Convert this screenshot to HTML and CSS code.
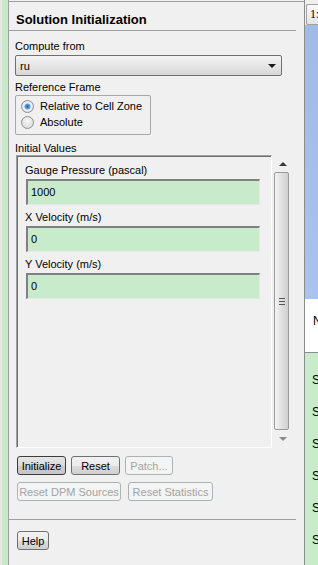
FILE: index.html
```html
<!DOCTYPE html>
<html lang="en">
<head>
    <meta charset="UTF-8">
    <meta name="viewport" content="width=device-width, initial-scale=1.0">
    <title>Solution Initialization</title>
    <link rel="stylesheet" href="styles.css">
</head>
<body>
    <div class="window">
        <div class="leftEdge"></div>

        <div class="panel">
            <div class="title">Solution Initialization</div>

            <div class="content">
                <div class="label firstLabel">Compute from</div>
                <div class="select">
                    <span>ru</span>
                    <span class="caret"></span>
                </div>

                <!-- Reference Frame -->
                <div class="label frameLabel">Reference Frame</div>
                <div class="group">
                    <div class="radioRow"><span class="radio checked"></span>Relative to Cell Zone</div>
                    <div class="radioRow"><span class="radio"></span>Absolute</div>
                </div>

                <!-- Initial Values -->
                <div class="label valuesLabel">Initial Values</div>
                <div class="values">
                    <div class="viewport">
                        <div class="fieldLabel">Gauge Pressure (pascal)</div>
                        <div class="field">1000</div>
                        <div class="fieldLabel">X Velocity (m/s)</div>
                        <div class="field">0</div>
                        <div class="fieldLabel">Y Velocity (m/s)</div>
                        <div class="field">0</div>
                    </div>
                    <div class="scrollbar">
                        <div class="arrowBox"><span class="arrow up"></span></div>
                        <div class="thumb"><span class="grip"></span></div>
                        <div class="arrowBox bottom"><span class="arrow down"></span></div>
                    </div>
                </div>

                <div class="buttonRow first">
                    <button class="btn active" id="initialize">Initialize</button>
                    <button class="btn" id="reset">Reset</button>
                    <button class="btn" id="patch" disabled>Patch...</button>
                </div>
                <div class="buttonRow second">
                    <button class="btn" id="resetDpm" disabled>Reset DPM Sources</button>
                    <button class="btn" id="resetStats" disabled>Reset Statistics</button>
                </div>
            </div>

            <div class="separator"></div>
            <div class="footer">
                <button class="btn" id="help">Help</button>
            </div>
        </div>

        <div class="rightEdge">
            <div class="tab">1:</div>
            <div class="blueArea"></div>
            <div class="whiteArea"><span>N</span></div>
            <div class="greenArea">
                <div>S</div>
                <div>S</div>
                <div>S</div>
                <div>S</div>
                <div>S</div>
                <div>S</div>
            </div>
        </div>
    </div>
</body>
</html>
```

FILE: styles.css
```css
body {
    margin: 0;
    width: 318px;
    height: 565px;
    overflow: hidden;
    font-family: "Liberation Sans", Arial, sans-serif;
    font-size: 11px;
    color: #000;
    background-color: #f0f0f0;
}

.window {
    display: flex;
    height: 565px;
}

.leftEdge {
    width: 6px;
    border-left: 2px solid #e2e8e2;
    border-right: 1px solid #a0a0a0;
    background-color: #c7e9c7;
}

.panel {
    flex: 1;
    margin-top: 1px;
    border-top: 1px solid #a0a0a0;
    background-color: #f0f0f0;
}

.title {
    margin-right: 8px;
    padding: 10px 0 2px 7px;
    font-size: 13px;
    font-weight: bold;
    line-height: 16px;
    border-bottom: 1px solid #a0a0a0;
}

.content {
    padding-left: 6px;
}

.label {
    line-height: 14px;
}

.firstLabel {
    margin-top: 8px;
}

.frameLabel {
    margin-top: 4px;
}

.valuesLabel {
    margin-top: 6px;
}

/* Dropdown */
.select {
    display: flex;
    align-items: center;
    justify-content: space-between;
    box-sizing: border-box;
    width: 267px;
    height: 21px;
    margin-top: 2px;
    padding: 0 5px 0 4px;
    border: 1px solid #707070;
    border-radius: 2px;
    background: linear-gradient(#f4f4f4, #e6e6e6 50%, #d8d8d8);
}

.caret {
    width: 0;
    height: 0;
    border-left: 4px solid transparent;
    border-right: 4px solid transparent;
    border-top: 4px solid #1a1a1a;
}

/* Radio group */
.group {
    box-sizing: border-box;
    width: 136px;
    height: 40px;
    margin-top: 1px;
    padding: 2px 0 0 5px;
    border: 1px solid #a8a8a8;
    border-radius: 2px;
}

.radioRow {
    display: flex;
    align-items: center;
    height: 16px;
}

.radio {
    box-sizing: border-box;
    width: 13px;
    height: 13px;
    margin-right: 6px;
    border: 1px solid #8e8f8f;
    border-radius: 50%;
    background: radial-gradient(circle at 50% 40%, #f8f8f8, #d4d4d4);
}

.radio.checked {
    background: radial-gradient(circle, #2a6bb8 0, #5c9ae0 2.5px, #f4f4f4 3.5px, #dcdcdc 6px);
}

/* Initial values box */
.values {
    display: flex;
    height: 293px;
    margin-left: 1px;
}

.viewport {
    box-sizing: border-box;
    width: 256px;
    padding: 7px 0 0 8px;
    border-top: 1px solid #a0a0a0;
    border-left: 1px solid #a0a0a0;
    border-right: 1px solid #ffffff;
    border-bottom: 1px solid #ffffff;
    box-shadow: inset 1px 1px 0 #6d6d6d;
}

.fieldLabel {
    line-height: 14px;
    margin-top: 5px;
}

.fieldLabel:first-child {
    margin-top: 0;
}

.field {
    box-sizing: border-box;
    width: 234px;
    height: 26px;
    margin: 2px 0 0 1px;
    padding-left: 3px;
    line-height: 22px;
    border-top: 2px solid #808080;
    border-left: 2px solid #808080;
    border-right: 1px solid #e8e8e8;
    border-bottom: 1px solid #e8e8e8;
    background-color: #c8ebcb;
}

.scrollbar {
    display: flex;
    flex-direction: column;
    width: 19px;
}

.arrowBox {
    display: flex;
    justify-content: center;
    align-items: center;
    height: 17px;
    padding-left: 2px;
}

.arrowBox.bottom {
    height: 18px;
}

.arrow {
    width: 0;
    height: 0;
    border-left: 4px solid transparent;
    border-right: 4px solid transparent;
}

.arrow.up {
    border-bottom: 4px solid #3a3a3a;
}

.arrow.down {
    border-top: 4px solid #8a8a8a;
}

.thumb {
    flex: 1;
    display: flex;
    align-items: center;
    justify-content: center;
    width: 15px;
    margin-left: 2px;
    border: 1px solid #9a9a9a;
    border-radius: 2px;
    box-sizing: border-box;
    background: linear-gradient(90deg, #f4f4f4, #e4e4e4 40%, #cfcfcf);
}

.grip {
    width: 6px;
    height: 5px;
    border-top: 1px solid #555;
    border-bottom: 1px solid #555;
    background: linear-gradient(transparent 2px, #555 2px, #555 3px, transparent 3px);
}

/* Buttons */
.buttonRow {
    display: flex;
    margin-left: 2px;
}

.buttonRow.first {
    gap: 5px;
    margin-top: 8px;
}

.buttonRow.second {
    gap: 7px;
    margin-top: 7px;
}

.btn {
    box-sizing: border-box;
    height: 19px;
    padding: 0;
    font-family: "Liberation Sans", Arial, sans-serif;
    font-size: 11px;
    color: #000;
    border: 1px solid #707070;
    border-radius: 3px;
    background: linear-gradient(#f2f2f2, #ebebeb 50%, #dddddd 51%, #cfcfcf);
}

.btn.active {
    border-color: #3c3c3c;
    background: linear-gradient(#e6e6e6, #dadada 50%, #cdcdcd 51%, #c6c6c6);
}

.btn:disabled {
    color: #a3a3a3;
    border-color: #adb2b5;
    background: #f4f4f4;
}

#initialize { width: 49px; }
#reset { width: 49px; }
#patch { width: 48px; }
#resetDpm { width: 104px; }
#resetStats { width: 85px; }
#help { width: 32px; }

.separator {
    height: 1px;
    margin: 18px 8px 0 0;
    background-color: #a0a0a0;
}

.footer {
    padding: 11px 0 0 8px;
}

/* Neighbouring window strip */
.rightEdge {
    display: flex;
    flex-direction: column;
    width: 13px;
    border-left: 1px solid #8c8c8c;
    background-color: #f0f0f0;
    overflow: hidden;
}

.tab {
    box-sizing: border-box;
    height: 21px;
    margin: 4px 0 0 1px;
    padding-left: 3px;
    line-height: 19px;
    font-family: "Liberation Serif", serif;
    font-size: 12px;
    border: 1px solid #a0a0a0;
    border-right: none;
    border-radius: 2px 0 0 2px;
    background: linear-gradient(#fafafa, #e4e4e4);
}

.blueArea {
    height: 275px;
    background: linear-gradient(#a2bae6, #aac2ee);
}

.whiteArea {
    height: 54px;
    padding-left: 8px;
    line-height: 44px;
    font-size: 12px;
    background-color: #ffffff;
    border-bottom: 1px solid #8c8c8c;
    box-sizing: border-box;
}

.greenArea {
    flex: 1;
    padding: 20px 0 0 7px;
    font-size: 12px;
    background-color: #c8ecca;
}

.greenArea div {
    height: 32px;
    line-height: 14px;
}
```
